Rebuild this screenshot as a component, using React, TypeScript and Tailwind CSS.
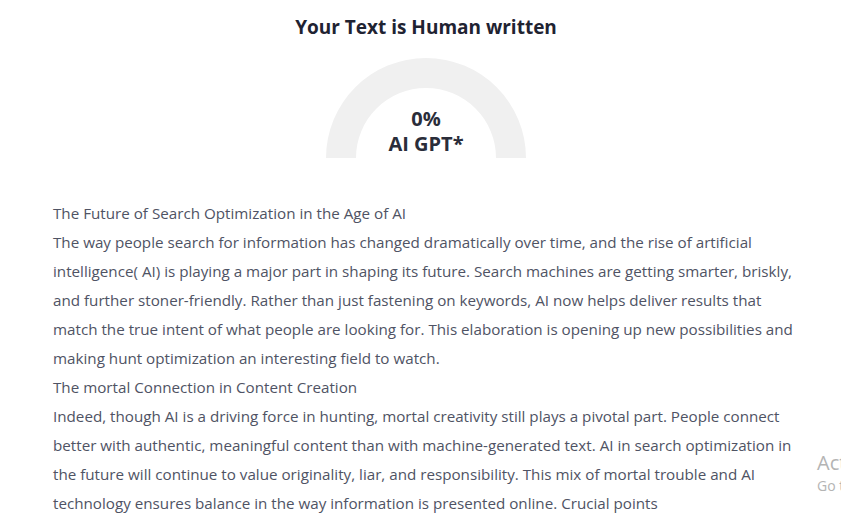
import React from "react";

const lines = [
  "The Future of Search Optimization in the Age of AI",
  "The way people search for information has changed dramatically over time, and the rise of artificial",
  "intelligence( AI) is playing a major part in shaping its future. Search machines are getting smarter, briskly,",
  "and further stoner-friendly. Rather than just fastening on keywords, AI now helps deliver results that",
  "match the true intent of what people are looking for. This elaboration is opening up new possibilities and",
  "making hunt optimization an interesting field to watch.",
  "The mortal Connection in Content Creation",
  "Indeed, though AI is a driving force in hunting, mortal creativity still plays a pivotal part. People connect",
  "better with authentic, meaningful content than with machine-generated text. AI in search optimization in",
  "the future will continue to value originality, liar, and responsibility. This mix of mortal trouble and AI",
  "technology ensures balance in the way information is presented online. Crucial points",
];

export default function App() {
  return (
    <div
      className="relative w-[841px] h-[522px] overflow-hidden bg-white"
      style={{ fontFamily: '"Open Sans", "Noto Sans", sans-serif' }}
    >
      <div className="w-[746px] ml-[53px] flex flex-col items-center">
        <h1 className="mt-[13px] text-[19px] leading-[28px] font-bold text-[#1f2332]">
          Your Text is Human written
        </h1>
        <div className="relative mt-[17px] w-[200px] h-[100px]">
          <svg width="200" height="100" viewBox="0 0 200 100" className="absolute inset-0">
            <path d="M0 100 A100 100 0 0 1 200 100 L170 100 A70 70 0 0 0 30 100 Z" fill="#f0f0f0" />
          </svg>
          <div className="absolute inset-x-0 top-[48px] flex flex-col items-center text-[20px] leading-[25px] font-bold text-[#2a2d3a]">
            <span>0%</span>
            <span>AI GPT*</span>
          </div>
        </div>
        <div className="self-stretch mt-[41px] text-[15.2px] leading-[29px] text-[#4f5364]">
          {lines.map((l, i) => (
            <div key={i} className="whitespace-nowrap">
              {l}
            </div>
          ))}
        </div>
      </div>
      <div className="absolute left-[817px] top-[450px] whitespace-nowrap text-[#b4b4b4]">
        <div className="text-[20px] leading-[26px]">Activate Windows</div>
        <div className="text-[14px] leading-[20px]">Go to Settings to activate Windows.</div>
      </div>
    </div>
  );
}
